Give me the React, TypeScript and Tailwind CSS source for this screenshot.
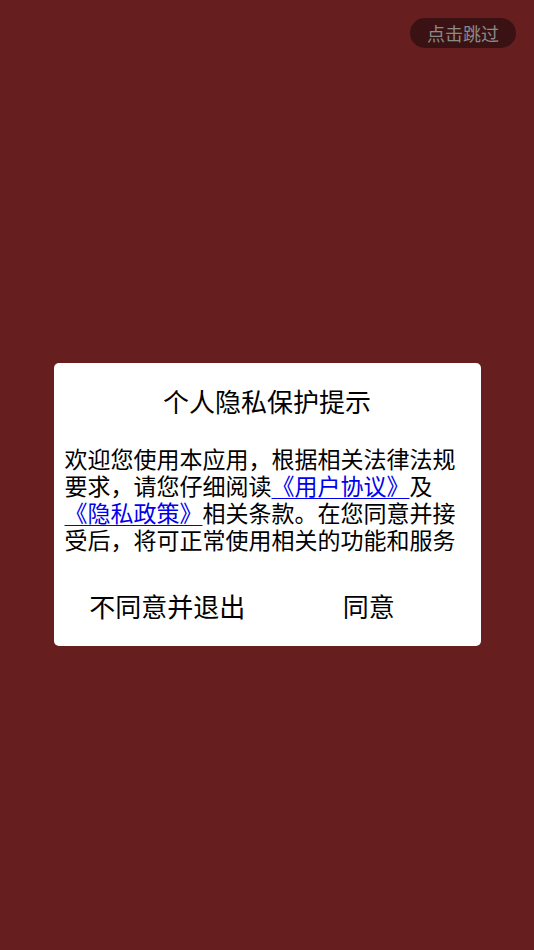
import React from "react";

export default function App() {
  const font = { fontFamily: '"Noto Sans CJK SC", "Noto Sans", sans-serif' };
  return (
    <div className="w-[534px] h-[950px] bg-[#661e1f] flex flex-col" style={font}>
      <div className="flex justify-end pt-[18px] pr-[18px]">
        <div className="w-[106px] h-[30px] rounded-full bg-[#3b1213] text-[#8a8a8a] text-[18px] flex items-center justify-center leading-none">
          点击跳过
        </div>
      </div>
      <div className="flex justify-center pt-[315px]">
        <div className="w-[427px] bg-white rounded-[5px] flex flex-col">
          <div className="text-center text-[26px] leading-[34px] text-black pt-[21px]">个人隐私保护提示</div>
          <div className="px-[11px] pt-[27px] text-[23px] leading-[27px] text-black">
            欢迎您使用本应用，根据相关法律法规要求，请您仔细阅读
            <span className="text-[#0000ee] underline decoration-1 underline-offset-[3px]">《用户协议》</span>及
            <span className="text-[#0000ee] underline decoration-1 underline-offset-[3px]">《隐私政策》</span>相关条款。在您同意并接受后，将可正常使用相关的功能和服务
          </div>
          <div className="flex pt-[36px] pb-[23px] text-[26px] leading-[34px] text-black">
            <div className="flex-1 text-center pl-[13px]">不同意并退出</div>
            <div className="flex-1 text-center pr-[11px]">同意</div>
          </div>
        </div>
      </div>
    </div>
  );
}
